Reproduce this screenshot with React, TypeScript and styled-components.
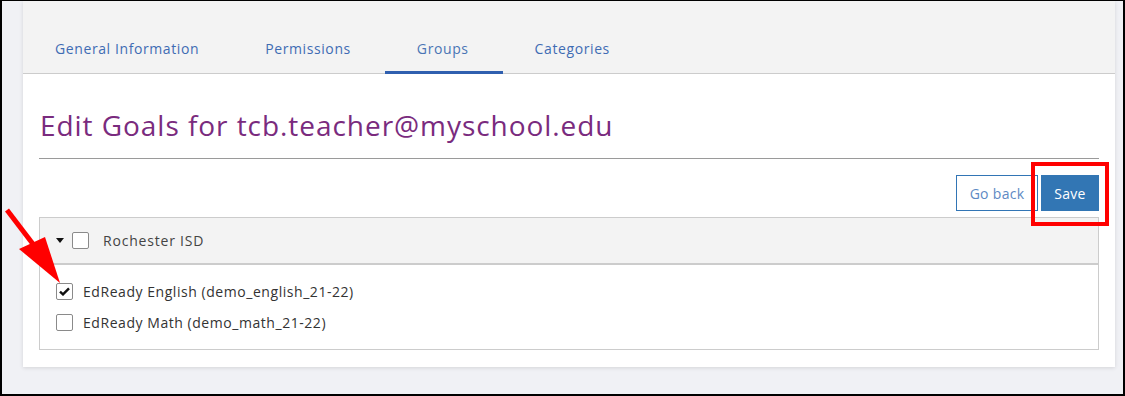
import React from 'react';
import styled, { createGlobalStyle } from 'styled-components';

const GlobalStyle = createGlobalStyle`
    html, body {
        margin: 0;
        padding: 0;
    }
    body {
        font-family: "Open Sans", "Liberation Sans", sans-serif;
        background: #ffffff;
    }
    * {
        box-sizing: border-box;
    }
`

interface TabProps {
    active?: boolean
}

interface CheckProps {
    checked?: boolean
}

const tabs = ['General Information', 'Permissions', 'Groups', 'Categories']

const goals = [
    { label: 'EdReady English (demo_english_21-22)', checked: true },
    { label: 'EdReady Math (demo_math_21-22)', checked: false },
]

const App: React.FC = () => {
    return (
        <>
            <GlobalStyle />
            <Frame>
                <Card>
                    <TabBar>
                        {tabs.map(t => (
                            <Tab key={t} active={t === 'Groups'}>{t}</Tab>
                        ))}
                    </TabBar>
                    <Content>
                        <Title>Edit Goals for tcb.teacher@myschool.edu</Title>
                        <Actions>
                            <GhostButton>Go back</GhostButton>
                            <SaveWrap>
                                <PrimaryButton>Save</PrimaryButton>
                                <Highlight />
                            </SaveWrap>
                        </Actions>
                        <Panel>
                            <PanelHeader>
                                <Caret />
                                <Check />
                                <HeaderLabel>Rochester ISD</HeaderLabel>
                            </PanelHeader>
                            <PanelBody>
                                {goals.map(g => (
                                    <Row key={g.label}>
                                        <Check checked={g.checked}>
                                            {g.checked &&
                                                <svg width="11" height="9" viewBox="0 0 11 9">
                                                    <path d="M1 4.6 L4 7.4 L10 1.4" fill="none" stroke="#111" strokeWidth="2.4" />
                                                </svg>
                                            }
                                        </Check>
                                        <RowLabel>{g.label}</RowLabel>
                                    </Row>
                                ))}
                            </PanelBody>
                        </Panel>
                    </Content>
                </Card>
                <Arrow width="70" height="90" viewBox="0 0 70 90">
                    <line x1="5" y1="10" x2="34" y2="48" stroke="#ff0000" strokeWidth="5" />
                    <polygon points="58,83 17,49 43,37" fill="#ff0000" />
                </Arrow>
            </Frame>
        </>
    );
};

const Frame = styled.div`
    position: relative;
    width: 1125px;
    height: 396px;
    border-style: solid;
    border-color: #000;
    border-width: 1px 2px 2px 2px;
    background: #f0f1f5;
    padding: 0 8px 0 21px;
    overflow: hidden;
`

const Card = styled.div`
    background: #fff;
    width: 1092px;
    box-shadow: 0 1px 4px rgba(0, 0, 0, 0.12);
    padding-bottom: 17px;
`

const TabBar = styled.div`
    display: flex;
    height: 73px;
    background: #f3f3f3;
    border-bottom: 1px solid #cccccc;
`

const Tab = styled.div<TabProps>`
    display: flex;
    align-items: center;
    height: 73px;
    margin-bottom: -1px;
    padding: 24px 34px 0 32px;
    font-size: 14px;
    letter-spacing: 0.6px;
    color: ${props => (props.active ? '#4a75b5' : '#3f6cb3')};
    border-bottom: 3px solid ${props => (props.active ? '#2f5faf' : 'transparent')};
`

const Content = styled.div`
    padding: 0 16px;
`

const Title = styled.h1`
    margin: 34px 0 0 0;
    padding: 0 0 16px 1px;
    border-bottom: 1px solid #9a9a9a;
    font-size: 28px;
    line-height: 34px;
    font-weight: 400;
    letter-spacing: 0.95px;
    color: #7a2b7e;
`

const Actions = styled.div`
    display: flex;
    justify-content: flex-end;
    gap: 3px;
    margin-top: 16px;
`

const GhostButton = styled.button`
    height: 36px;
    width: 82px;
    border: 1px solid #3275b5;
    background: #fff;
    color: #5d8ac4;
    font-family: "Open Sans", "Liberation Sans", sans-serif;
    font-size: 14px;
    letter-spacing: 0.3px;
    padding: 0;
`

const SaveWrap = styled.div`
    position: relative;
`

const PrimaryButton = styled.button`
    height: 36px;
    width: 58px;
    border: none;
    background: #3276b4;
    color: #fff;
    font-family: "Open Sans", "Liberation Sans", sans-serif;
    font-size: 14px;
    letter-spacing: 0.3px;
    padding: 0;
`

const Highlight = styled.div`
    position: absolute;
    left: -10px;
    top: -13px;
    width: 78px;
    height: 64px;
    border: 4px solid #ff0000;
`

const Panel = styled.div`
    margin-top: 6px;
    border: 1px solid #cccccc;
`

const PanelHeader = styled.div`
    display: flex;
    align-items: center;
    height: 47px;
    background: #f3f3f3;
    border-bottom: 2px solid #cccccc;
    padding-left: 16px;
`

const Caret = styled.span`
    width: 0;
    height: 0;
    border-left: 4px solid transparent;
    border-right: 4px solid transparent;
    border-top: 5px solid #111;
    margin-right: 8px;
`

const Check = styled.span<CheckProps>`
    display: inline-flex;
    align-items: center;
    justify-content: center;
    width: 17px;
    height: 17px;
    border: 1px solid #8a8a8a;
    border-radius: 2px;
    background: #fff;
`

const HeaderLabel = styled.span`
    margin-left: 14px;
    font-size: 14px;
    letter-spacing: 0.8px;
    color: #444;
`

const PanelBody = styled.div`
    display: flex;
    flex-direction: column;
    gap: 14px;
    padding: 18px 16px 18px 16px;
`

const Row = styled.div`
    display: flex;
    align-items: center;
    height: 17px;
`

const RowLabel = styled.span`
    margin-left: 10px;
    font-size: 14px;
    letter-spacing: 0.55px;
    color: #333;
`

const Arrow = styled.svg`
    position: absolute;
    left: 0;
    top: 199px;
`

export default App;
